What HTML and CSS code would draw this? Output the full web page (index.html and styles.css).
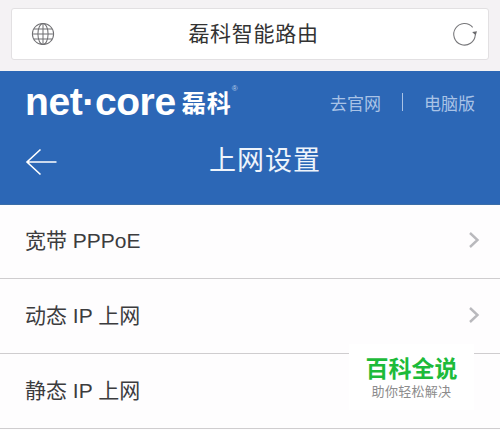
FILE: index.html
```html
<!DOCTYPE html>
<html lang="zh">
<head>
    <meta charset="UTF-8">
    <meta name="viewport" content="width=device-width, initial-scale=1.0">
    <title>磊科智能路由</title>
    <link rel="stylesheet" href="styles.css">
</head>
<body>

<div class="browserBar">
    <div class="addressBox">
        <svg class="globeIcon" width="24" height="24" viewBox="0 0 26 26" fill="none" stroke="#6f6f72" stroke-width="1.1">
            <circle cx="13" cy="13" r="11.5"/>
            <ellipse cx="13" cy="13" rx="5.5" ry="11.5"/>
            <path d="M13 1.5V24.5M1.5 13H24.5M3.2 7.5H22.8M3.2 18.5H22.8"/>
        </svg>
        <span class="addressTitle">磊科智能路由</span>
        <svg class="reloadIcon" width="25" height="25" viewBox="0 0 26 26" fill="none">
            <path d="M21.5 5.5A11.2 11.2 0 1 0 24.2 13.5" stroke="#77777a" stroke-width="1.1"/>
            <path d="M21 10.5L24.6 14L26 9.6Z" fill="#6a6a6d"/>
        </svg>
    </div>
</div>

<div class="header">
    <div class="headerTop">
        <div class="logo">
            <span class="logoName">net·core</span>
            <span class="logoCn">磊科</span>
            <span class="logoReg">®</span>
        </div>
        <div class="headerLinks">
            <span>去官网</span>
            <span class="linkLine"></span>
            <span>电脑版</span>
        </div>
    </div>
    <div class="headerTitle">
        <svg class="backIcon" width="32" height="28" viewBox="0 0 32 28" fill="none" stroke="#ffffff" stroke-width="1.6">
            <path d="M15.5 1.5L2 14L15.5 26.5M2 14H31.5"/>
        </svg>
        <h1>上网设置</h1>
    </div>
</div>

<ul class="menuList">
    <li class="menuItem">
        <span>宽带 PPPoE</span>
        <svg class="arrowIcon" width="12" height="18" viewBox="0 0 12 18" fill="none" stroke="#b9b9bd" stroke-width="2.4"><path d="M2 2L9.5 9L2 16"/></svg>
    </li>
    <li class="menuItem">
        <span>动态 IP 上网</span>
        <svg class="arrowIcon" width="12" height="18" viewBox="0 0 12 18" fill="none" stroke="#b9b9bd" stroke-width="2.4"><path d="M2 2L9.5 9L2 16"/></svg>
    </li>
    <li class="menuItem">
        <span>静态 IP 上网</span>
    </li>
</ul>

<div class="watermark">
    <div class="watermarkTitle">百科全说</div>
    <div class="watermarkSub">助你轻松解决</div>
</div>

</body>
</html>
```

FILE: styles.css
```css
html, body {
    margin: 0;
    padding: 0;
}
body {
    width: 500px;
    height: 430px;
    overflow: hidden;
    position: relative;
    background-color: #fefdfe;
    font-family: "Liberation Sans", "Noto Sans CJK SC", sans-serif;
}
.browserBar {
    height: 71px;
    box-sizing: border-box;
    padding: 8px 11px 0;
    background-color: #f4f2f4;
}
.addressBox {
    height: 52px;
    box-sizing: border-box;
    display: flex;
    align-items: center;
    justify-content: space-between;
    padding: 0 11px 0 19px;
    background-color: #ffffff;
    border: 1px solid #e2e0e2;
    border-radius: 3px;
}
.addressTitle {
    font-size: 21px;
    color: #333333;
    letter-spacing: 0.7px;
    padding-bottom: 4px;
}
.header {
    height: 134px;
    box-sizing: border-box;
    padding: 0 25px;
    background-color: #2c67b6;
    border-bottom: 1px solid #3b6ea8;
    color: #ffffff;
}
.headerTop {
    height: 64px;
    display: flex;
    align-items: center;
    justify-content: space-between;
}
.logo {
    display: flex;
    align-items: center;
    padding-bottom: 3px;
}
.logoName {
    font-size: 39px;
    font-weight: bold;
    letter-spacing: -0.4px;
    line-height: 1;
}
.logoCn {
    font-size: 24px;
    font-weight: bold;
    margin-left: 6px;
    letter-spacing: 1px;
}
.logoReg {
    font-size: 8px;
    align-self: flex-start;
    margin-top: 2px;
    color: #b9cde8;
}
.headerLinks {
    display: flex;
    align-items: center;
    gap: 21px;
    font-size: 17px;
    color: #a9c3e6;
    padding-bottom: 2px;
}
.linkLine {
    width: 1px;
    height: 18px;
    background-color: #a9c3e6;
}
.headerTitle {
    position: relative;
    height: 44px;
    margin-top: 1px;
    display: flex;
    align-items: center;
    justify-content: center;
}
.backIcon {
    position: absolute;
    left: 0;
    top: 12px;
}
.headerTitle h1 {
    margin: 0 0 0 30px;
    font-size: 27px;
    font-weight: normal;
    color: #eef4fb;
    letter-spacing: 1px;
}
.menuList {
    margin: 0;
    padding: 0;
    list-style: none;
}
.menuItem {
    height: 74px;
    box-sizing: border-box;
    display: flex;
    align-items: center;
    justify-content: space-between;
    padding: 0 20px 5px 25px;
    margin-bottom: 1px;
    border-bottom: 1px solid #cfcdcf;
    font-size: 21px;
    color: #3c3c3e;
}
.arrowIcon {
    margin-top: 2px;
}
.watermark {
    position: absolute;
    left: 349px;
    top: 344px;
    width: 125px;
    height: 66px;
    box-sizing: border-box;
    padding-top: 12px;
    background-color: #ffffff;
    text-align: center;
}
.watermarkTitle {
    font-size: 23px;
    line-height: 26px;
    font-weight: bold;
    color: #1dbb3a;
}
.watermarkSub {
    font-size: 13px;
    line-height: 18px;
    margin-top: 1px;
    letter-spacing: 0.3px;
    color: #8c8c8c;
}
```
